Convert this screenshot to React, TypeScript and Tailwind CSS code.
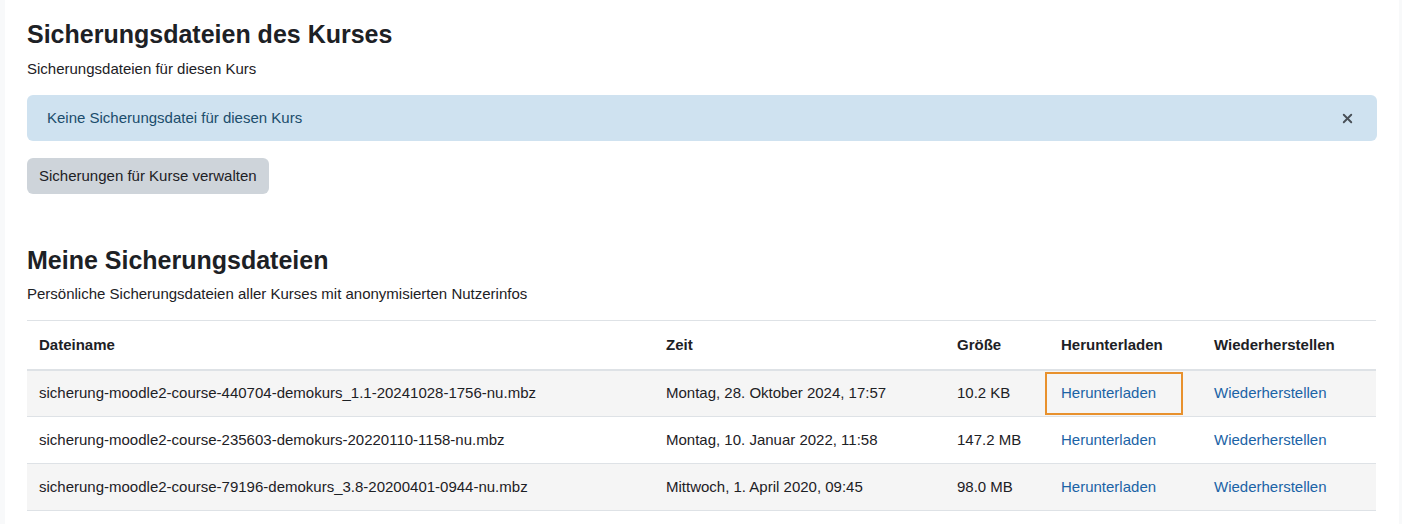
import { X } from 'lucide-react'

const rows = [
  {
    name: 'sicherung-moodle2-course-440704-demokurs_1.1-20241028-1756-nu.mbz',
    time: 'Montag, 28. Oktober 2024, 17:57',
    size: '10.2 KB',
    focus: true,
  },
  {
    name: 'sicherung-moodle2-course-235603-demokurs-20220110-1158-nu.mbz',
    time: 'Montag, 10. Januar 2022, 11:58',
    size: '147.2 MB',
    focus: false,
  },
  {
    name: 'sicherung-moodle2-course-79196-demokurs_3.8-20200401-0944-nu.mbz',
    time: 'Mittwoch, 1. April 2020, 09:45',
    size: '98.0 MB',
    focus: false,
  },
]

export default function App() {
  return (
    <div className="flex h-[524px] bg-[#f8f9fa] text-[#1d2125]" style={{ fontFamily: '"Liberation Sans", Arial, sans-serif' }}>
      <div className="w-[5px] shrink-0" />
      <main className="flex-1 bg-white pl-[22px] pr-[22px]">
        {/* Kurs-Sicherungen */}
        <h2 className="pt-[19px] text-[25px] font-bold leading-[30px]">Sicherungsdateien des Kurses</h2>
        <p className="mt-[9px] text-[15px] leading-[22px]">Sicherungsdateien für diesen Kurs</p>

        <div className="mt-[15px] flex h-[46px] items-center justify-between rounded-md bg-[#cfe2f0] pl-5 pr-[22px] text-[15px] text-[#1b4d6c]">
          <span>Keine Sicherungsdatei für diesen Kurs</span>
          <X size={15} strokeWidth={3} className="text-[#495057]" />
        </div>

        <button className="mt-[17px] h-9 rounded-md bg-[#ced4da] px-3 text-[15px] text-[#1d2125]">
          Sicherungen für Kurse verwalten
        </button>

        {/* Eigene Sicherungen */}
        <h2 className="mt-[51px] text-[25px] font-bold leading-[30px]">Meine Sicherungsdateien</h2>
        <p className="mt-[8px] text-[15px] leading-[22px]">Persönliche Sicherungsdateien aller Kurses mit anonymisierten Nutzerinfos</p>

        <table className="mt-[15px] w-[1349px] table-fixed border-collapse text-[15px]">
          <colgroup>
            <col className="w-[627px]" />
            <col className="w-[291px]" />
            <col className="w-[104px]" />
            <col className="w-[153px]" />
            <col className="w-[174px]" />
          </colgroup>
          <thead>
            <tr className="border-t border-b-2 border-[#dee2e6]">
              {['Dateiname', 'Zeit', 'Größe', 'Herunterladen', 'Wiederherstellen'].map(h => (
                <th key={h} className="h-[49px] px-3 text-left font-bold">{h}</th>
              ))}
            </tr>
          </thead>
          <tbody>
            {rows.map((r, i) => (
              <tr key={r.name} className={`border-b border-[#dee2e6] ${i % 2 === 0 ? 'bg-[#f5f5f5]' : 'bg-white'}`}>
                <td className="h-[47px] px-3">{r.name}</td>
                <td className="px-3">{r.time}</td>
                <td className="px-3">{r.size}</td>
                <td className="px-3">
                  <span className="relative">
                    <a href="#" className="text-[#1b63a6]">Herunterladen</a>
                    {r.focus && (
                      <span className="pointer-events-none absolute -left-4 -right-[27px] -top-[12px] -bottom-[14px] border-2 border-[#e8912d]" />
                    )}
                  </span>
                </td>
                <td className="px-3">
                  <a href="#" className="text-[#1b63a6]">Wiederherstellen</a>
                </td>
              </tr>
            ))}
          </tbody>
        </table>
      </main>
      <div className="w-[3px] shrink-0" />
    </div>
  )
}
